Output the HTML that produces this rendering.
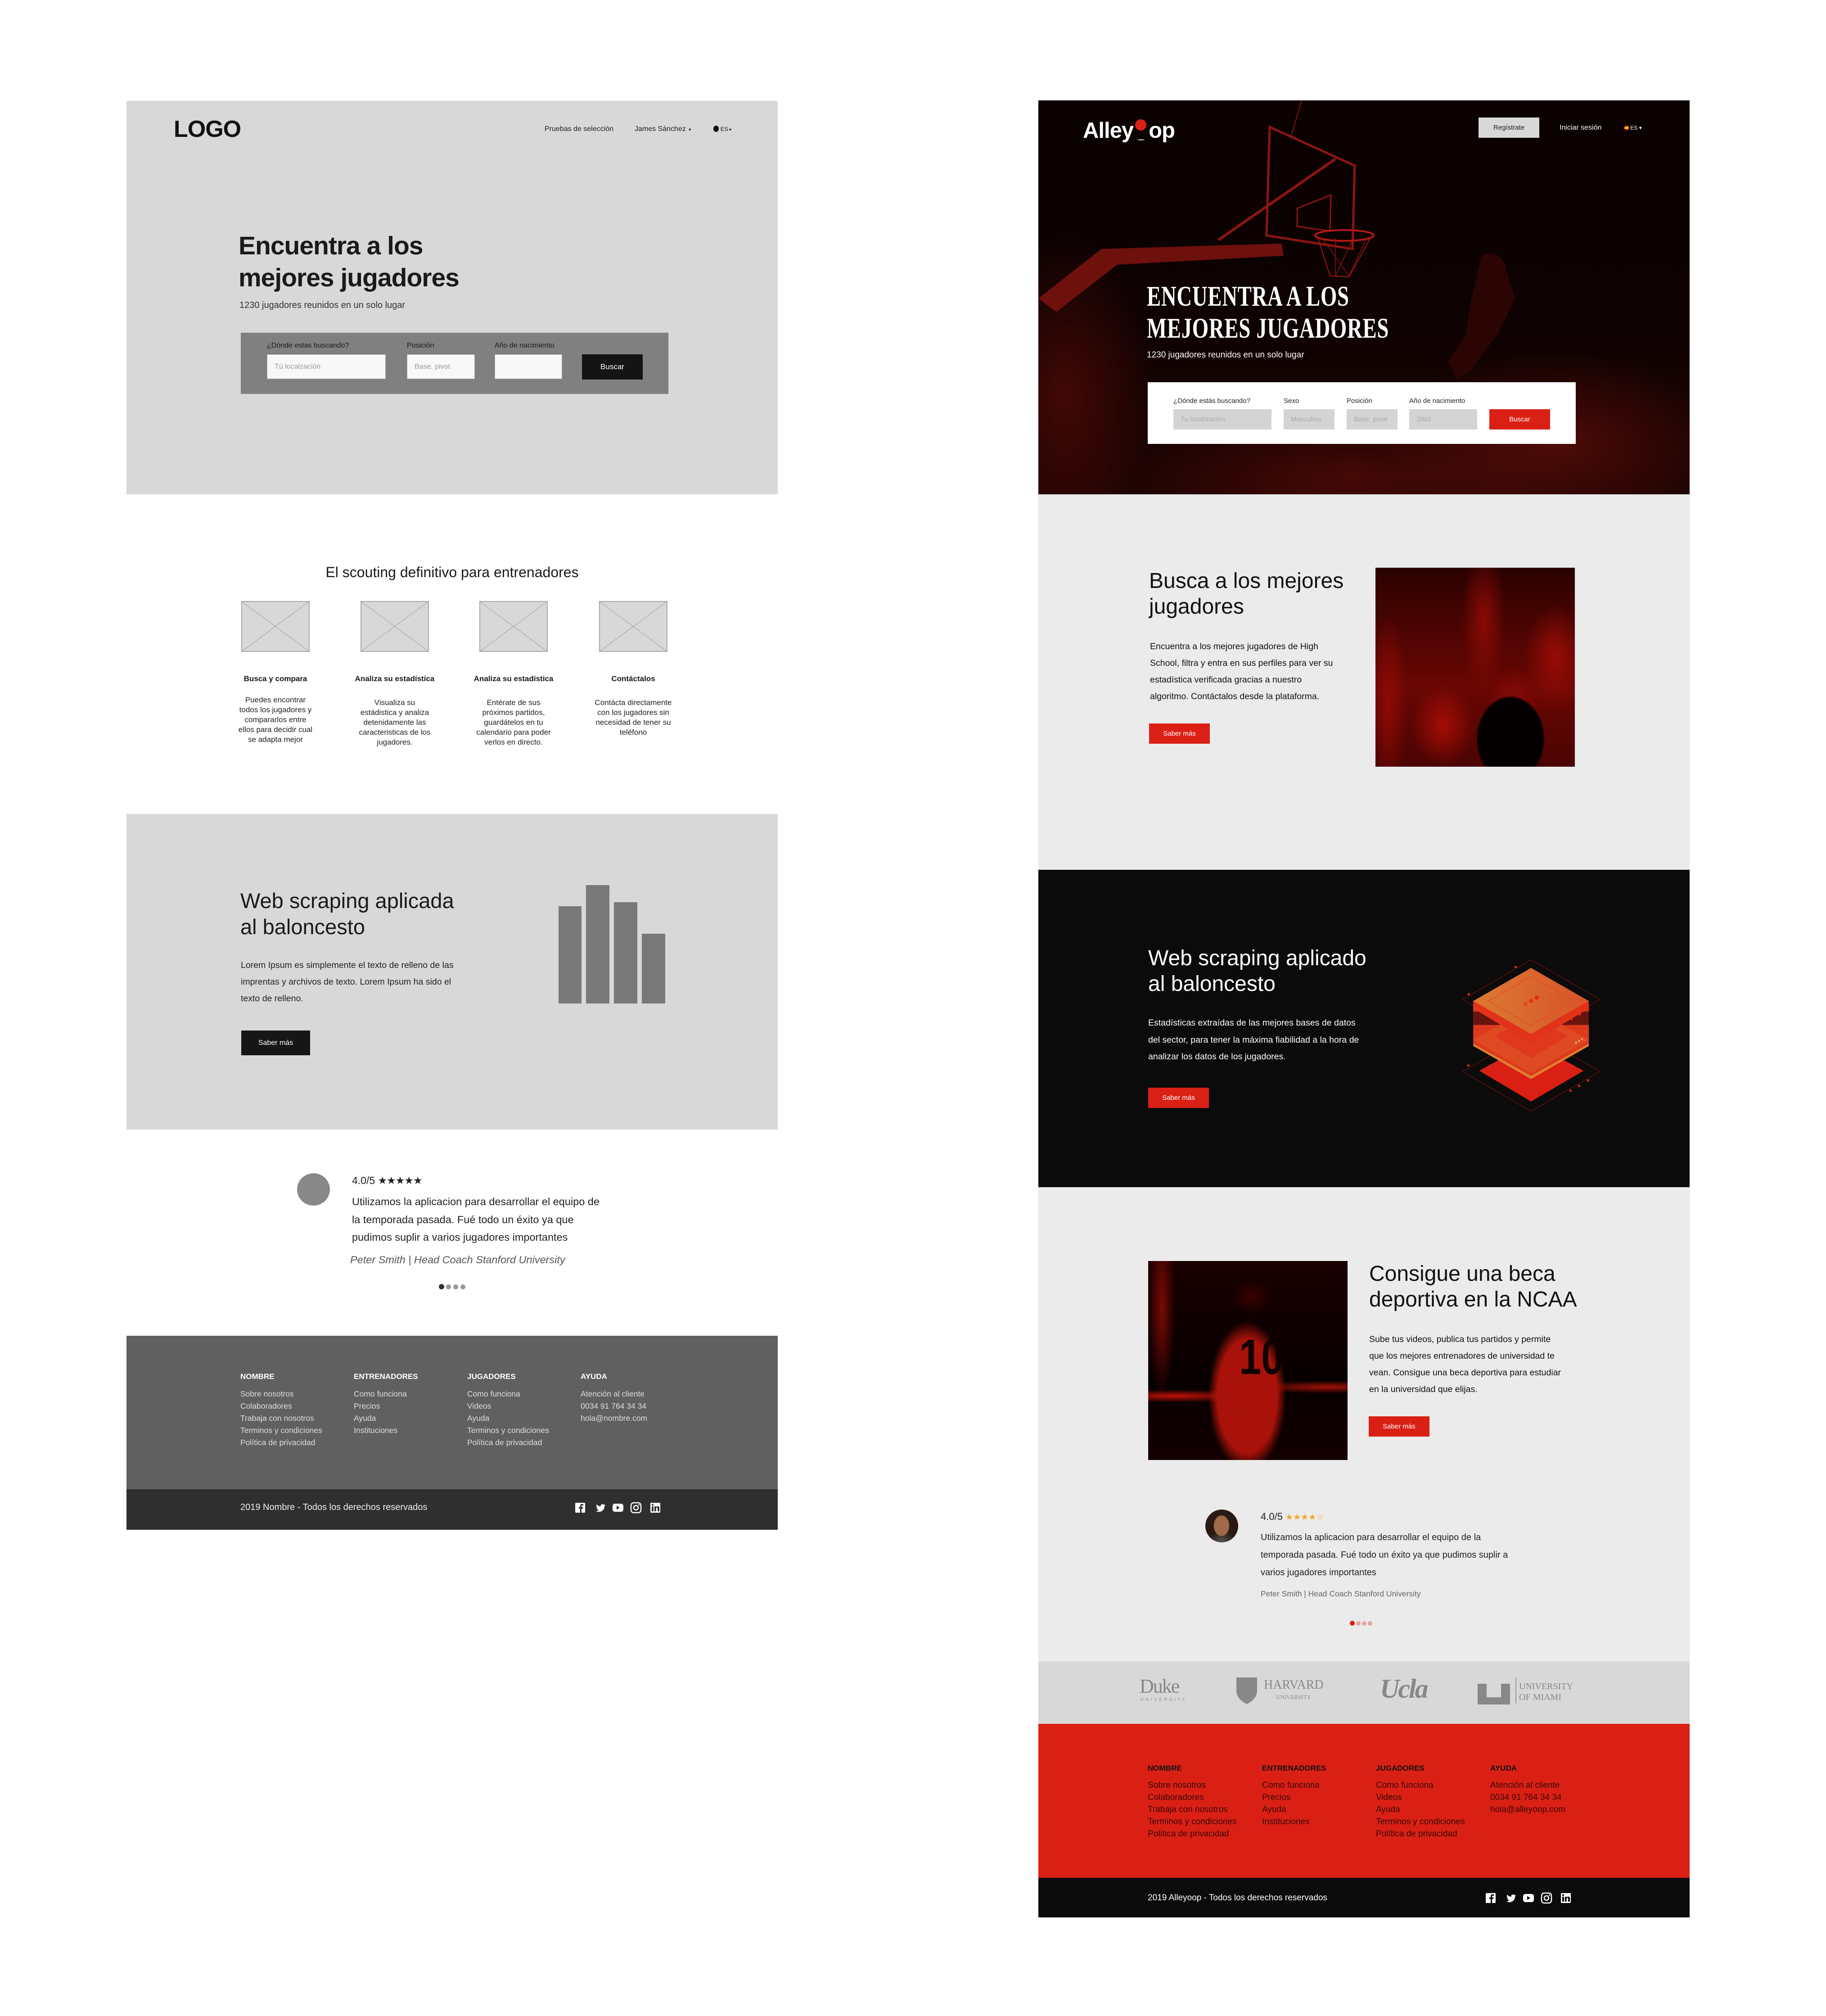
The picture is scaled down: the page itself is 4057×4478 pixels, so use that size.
<!DOCTYPE html>
<html><head><meta charset="utf-8">
<style>
*{margin:0;padding:0;box-sizing:border-box}
body{width:4057px;height:4478px;background:#fff;position:relative;overflow:hidden;font-family:"Liberation Sans",Arial,sans-serif}
.a{position:absolute}
.n{font-family:"Liberation Sans",sans-serif}
.t{position:absolute;white-space:nowrap}
.fcol{position:absolute;line-height:27px}
.fcol b{display:block;margin-bottom:12px}
</style></head><body>

<!-- ================= LEFT WIREFRAME ================= -->
<div class="a" style="left:281px;top:224px;width:1447px;height:874px;background:#d8d8d8"></div>
<div class="t" style="left:386px;top:256px;font-size:52px;line-height:62px;font-weight:bold;color:#111;letter-spacing:-1px">LOGO</div>
<div class="t" style="left:1210px;top:276px;font-size:16px;line-height:22px;color:#222">Pruebas de selección</div>
<div class="t" style="left:1410px;top:276px;font-size:16px;line-height:22px;color:#222">James Sánchez <span style="font-size:9px">▼</span></div>
<div class="t" style="left:1585px;top:276px;font-size:13px;line-height:22px;color:#222"><span style="display:inline-block;width:12px;height:14px;border-radius:50%;background:#111;vertical-align:-2px"></span> ES<span style="font-size:9px">▼</span></div>
<div class="t" style="left:530px;top:511px;font-size:57px;line-height:71px;font-weight:bold;color:#1a1a1a;letter-spacing:-1px">Encuentra a los<br>mejores jugadores</div>
<div class="t" style="left:532px;top:666px;font-size:20px;line-height:24px;color:#333">1230 jugadores reunidos en un solo lugar</div>
<div class="a" style="left:535px;top:739px;width:950px;height:136px;background:#808080"></div>
<div class="t" style="left:593px;top:759px;font-size:16px;color:#1a1a1a">¿Dónde estas buscando?</div>
<div class="t" style="left:904px;top:759px;font-size:16px;color:#1a1a1a">Posición</div>
<div class="t" style="left:1099px;top:759px;font-size:16px;color:#1a1a1a">Año de nacimiento</div>
<div class="a" style="left:593px;top:787px;width:264px;height:55px;background:#f8f8f8;border:1px solid #aaa;font-size:16px;color:#999;line-height:53px;padding-left:16px">Tú localzación</div>
<div class="a" style="left:904px;top:787px;width:151px;height:55px;background:#f8f8f8;border:1px solid #aaa;font-size:16px;color:#999;line-height:53px;padding-left:16px">Base, pivot</div>
<div class="a" style="left:1099px;top:787px;width:150px;height:55px;background:#f8f8f8;border:1px solid #aaa"></div>
<div class="a" style="left:1293px;top:787px;width:135px;height:56px;background:#141414;color:#fff;font-size:17px;line-height:56px;text-align:center">Buscar</div>

<!-- features -->
<div class="t" style="left:281px;width:1447px;text-align:center;top:1252px;font-size:32px;line-height:38px;color:#1a1a1a">El scouting definitivo para entrenadores</div>
<svg class="a" style="left:536px;top:1335px" width="152" height="113"><rect x="1" y="1" width="150" height="111" fill="#d8d8d8" stroke="#a8a8a8" stroke-width="2"/><path d="M1 1L151 112M151 1L1 112" stroke="#999" stroke-width="1"/></svg>
<svg class="a" style="left:801px;top:1335px" width="152" height="113"><rect x="1" y="1" width="150" height="111" fill="#d8d8d8" stroke="#a8a8a8" stroke-width="2"/><path d="M1 1L151 112M151 1L1 112" stroke="#999" stroke-width="1"/></svg>
<svg class="a" style="left:1065px;top:1335px" width="152" height="113"><rect x="1" y="1" width="150" height="111" fill="#d8d8d8" stroke="#a8a8a8" stroke-width="2"/><path d="M1 1L151 112M151 1L1 112" stroke="#999" stroke-width="1"/></svg>
<svg class="a" style="left:1331px;top:1335px" width="152" height="113"><rect x="1" y="1" width="150" height="111" fill="#d8d8d8" stroke="#a8a8a8" stroke-width="2"/><path d="M1 1L151 112M151 1L1 112" stroke="#999" stroke-width="1"/></svg>
<div class="t" style="left:502px;width:220px;text-align:center;top:1498px;font-size:17px;font-weight:bold;color:#1a1a1a">Busca y compara</div>
<div class="t" style="left:767px;width:220px;text-align:center;top:1498px;font-size:17px;font-weight:bold;color:#1a1a1a">Analiza su estadística</div>
<div class="t" style="left:1031px;width:220px;text-align:center;top:1498px;font-size:17px;font-weight:bold;color:#1a1a1a">Analiza su estadística</div>
<div class="t" style="left:1297px;width:220px;text-align:center;top:1498px;font-size:17px;font-weight:bold;color:#1a1a1a">Contáctalos</div>
<div class="t" style="left:502px;width:220px;text-align:center;top:1544px;font-size:17px;line-height:22px;color:#222">Puedes encontrar<br>todos los jugadores y<br>compararlos entre<br>ellos para decidir cual<br>se adapta mejor</div>
<div class="t" style="left:767px;width:220px;text-align:center;top:1550px;font-size:17px;line-height:22px;color:#222">Visualiza su<br>estádistica y analiza<br>detenidamente las<br>caracteristicas de los<br>jugadores.</div>
<div class="t" style="left:1031px;width:220px;text-align:center;top:1550px;font-size:17px;line-height:22px;color:#222">Entérate de sus<br>próximos partidos,<br>guardátelos en tu<br>calendario para poder<br>verlos en directo.</div>
<div class="t" style="left:1297px;width:220px;text-align:center;top:1550px;font-size:17px;line-height:22px;color:#222">Contácta directamente<br>con los jugadores sin<br>necesidad de tener su<br>teléfono</div>

<!-- web scraping left -->
<div class="a" style="left:281px;top:1808px;width:1447px;height:701px;background:#d8d8d8"></div>
<div class="t" style="left:534px;top:1972px;font-size:47px;line-height:58px;color:#1a1a1a">Web scraping aplicada<br>al baloncesto</div>
<div class="t" style="left:535px;top:2126px;font-size:19.5px;line-height:37px;color:#222">Lorem Ipsum es simplemente el texto de relleno de las<br>imprentas y archivos de texto. Lorem Ipsum ha sido el<br>texto de relleno.</div>
<div class="a" style="left:536px;top:2289px;width:153px;height:55px;background:#161616;color:#fff;font-size:16px;line-height:55px;text-align:center">Saber más</div>
<div class="a" style="left:1241px;top:2013px;width:51px;height:216px;background:#787878"></div>
<div class="a" style="left:1302px;top:1966px;width:52px;height:263px;background:#787878"></div>
<div class="a" style="left:1364px;top:2004px;width:52px;height:225px;background:#787878"></div>
<div class="a" style="left:1426px;top:2074px;width:52px;height:155px;background:#787878"></div>

<!-- testimonial left -->
<div class="a" style="left:660px;top:2606px;width:73px;height:72px;border-radius:50%;background:#888"></div>
<div class="t" style="left:782px;top:2608px;font-size:23px;line-height:28px;color:#222">4.0/5 <span style="letter-spacing:-1px">★★★★★</span></div>
<div class="t" style="left:782px;top:2650px;font-size:23.5px;line-height:39.5px;color:#222">Utilizamos la aplicacion para desarrollar el equipo de<br>la temporada pasada. Fué todo un éxito ya que<br>pudimos suplir a varios jugadores importantes</div>
<div class="t" style="left:778px;top:2784px;font-size:23.5px;line-height:28px;color:#555;font-style:italic">Peter Smith | Head Coach Stanford University</div>
<div class="a" style="left:975px;top:2852px;width:12px;height:12px;border-radius:50%;background:#333"></div>
<div class="a" style="left:991px;top:2853px;width:11px;height:11px;border-radius:50%;background:#999"></div>
<div class="a" style="left:1007px;top:2853px;width:11px;height:11px;border-radius:50%;background:#999"></div>
<div class="a" style="left:1023px;top:2853px;width:11px;height:11px;border-radius:50%;background:#999"></div>

<!-- footer left -->
<div class="a" style="left:281px;top:2967px;width:1447px;height:341px;background:#606060"></div>
<div class="a" style="left:281px;top:3308px;width:1447px;height:90px;background:#2f2f2f"></div>
<div class="fcol" style="left:534px;top:3044px;color:#ddd;font-size:17.5px"><b style="color:#fff;font-size:17px">NOMBRE</b>Sobre nosotros<br>Colaboradores<br>Trabaja con nosotros<br>Terminos y condiciones<br>Política de privacidad</div>
<div class="fcol" style="left:786px;top:3044px;color:#ddd;font-size:17.5px"><b style="color:#fff;font-size:17px">ENTRENADORES</b>Como funciona<br>Precios<br>Ayuda<br>Instituciones</div>
<div class="fcol" style="left:1038px;top:3044px;color:#ddd;font-size:17.5px"><b style="color:#fff;font-size:17px">JUGADORES</b>Como funciona<br>Videos<br>Ayuda<br>Terminos y condiciones<br>Política de privacidad</div>
<div class="fcol" style="left:1290px;top:3044px;color:#ddd;font-size:17.5px"><b style="color:#fff;font-size:17px">AYUDA</b>Atención al cliente<br>0034 91 764 34 34<br>hola@nombre.com</div>
<div class="t" style="left:534px;top:3336px;font-size:20px;line-height:24px;color:#eee">2019 Nombre - Todos los derechos reservados</div>
<svg class="a" style="left:1276px;top:3336px" width="205" height="26" viewBox="0 0 205 26">
<g fill="#fff">
<rect x="2" y="2" width="22" height="22" rx="2"/><path d="M16 24V15h3l.5-3.5H16V9.5c0-1 .4-1.6 1.7-1.6H20V4.8c-.5-.1-1.6-.2-2.7-.2-2.6 0-4.2 1.6-4.2 4.4v2.5H10V15h3v9z" fill="#2f2f2f"/>
<path d="M69 7c-.8.4-1.6.6-2.5.7.9-.6 1.6-1.4 1.9-2.4-.9.5-1.8.9-2.8 1.1-1.7-1.8-4.6-1.7-6.2.2-.8.9-1.1 2.2-.8 3.4-3.5-.2-6.8-1.8-9-4.5-1.2 2-.6 4.6 1.4 5.9-.7 0-1.4-.2-2-.5 0 2.1 1.5 3.9 3.5 4.3-.6.2-1.3.2-2 .1.6 1.8 2.2 3 4.1 3-1.9 1.5-4.3 2.2-6.7 1.9 2 1.3 4.4 2 6.8 2 8.2 0 12.7-7 12.5-13.2.9-.6 1.6-1.3 2.2-2.1z"/>
<rect x="85" y="4" width="24" height="18" rx="5"/><path d="M94 8.5v9l7-4.5z" fill="#2f2f2f"/>
<rect x="126" y="2" width="22" height="22" rx="6" fill="none" stroke="#fff" stroke-width="2.5"/><circle cx="137" cy="13" r="5" fill="none" stroke="#fff" stroke-width="2.5"/><circle cx="143.5" cy="6.5" r="1.5"/>
<rect x="169" y="2" width="22" height="22" rx="2"/><rect x="172" y="10" width="4" height="11" fill="#2f2f2f"/><circle cx="174" cy="6.5" r="2.2" fill="#2f2f2f"/><path d="M178 10h3.8v1.6c.6-1 1.8-1.9 3.6-1.9 3 0 3.6 2 3.6 4.5V21h-4v-5.8c0-1.3-.1-2.6-1.6-2.6s-1.7 1.1-1.7 2.5V21H178z" fill="#2f2f2f"/>
</g></svg>

<!-- ================= RIGHT DESIGN ================= -->
<div class="a" style="left:2307px;top:223px;width:1447px;height:875px;overflow:hidden;background:#0a0101">
<div class="a" style="left:0;top:0;width:1447px;height:875px;background:
radial-gradient(ellipse 380px 200px at 1150px 760px,rgba(130,18,12,.5),transparent),
radial-gradient(ellipse 500px 150px at 700px 840px,rgba(110,14,9,.5),transparent),
radial-gradient(ellipse 200px 350px at 60px 650px,rgba(110,14,9,.5),transparent),
linear-gradient(180deg,#0b0101 0%,#0e0202 55%,#1e0403 100%)"></div>
<svg class="a" style="left:0;top:0" width="1447" height="875" viewBox="0 0 1447 875">
<g fill="none" stroke="#8c1510" stroke-width="5">
<path d="M514 59 L703 145 L698 330 L507 300 Z"/>
<path d="M575 240 L650 210 L648 290 L575 280 Z" stroke-width="3"/>
<path d="M400 310 L660 130" stroke-width="6"/>
<path d="M585 0 L560 85" stroke-width="2"/>
</g>
<path d="M0 440 L140 330 L540 318 L545 345 L175 365 L40 470 Z" fill="#6e100c"/>
<ellipse cx="680" cy="300" rx="65" ry="12" fill="none" stroke="#b41a12" stroke-width="4"/>
<path d="M620 302 L648 390 L690 392 L740 302" fill="none" stroke="#a0160f" stroke-width="2"/>
<path d="M630 305 L690 390 M660 305 L660 390 M700 305 L660 390 M730 305 L690 390" stroke="#8c1510" stroke-width="1.5"/>
<path d="M985 345 C1010 330 1040 350 1040 380 L1060 440 L1020 520 L990 560 L960 600 L930 620 L910 580 L950 520 L960 450 Z" fill="#2a0504"/>
</svg>
</div>
<div class="t" style="left:2406px;top:261px;font-size:49px;line-height:58px;font-weight:bold;color:#fff;letter-spacing:-1px">Alley<span style="display:inline-block;width:34px"></span>op</div>
<div class="a" style="left:2522px;top:265px;width:25px;height:25px;border-radius:50%;background:#d92015"></div>
<div class="a" style="left:2527px;top:309px;width:16px;height:3px;border-radius:50%;background:#aaa"></div>
<div class="a" style="left:3285px;top:261px;width:135px;height:45px;background:#d8d8d8;color:#222;font-size:15px;line-height:45px;text-align:center">Regístrate</div>
<div class="t" style="left:3465px;top:273px;font-size:16px;line-height:22px;color:#fff">Iniciar sesión</div>
<div class="t" style="left:3609px;top:275px;font-size:12px;line-height:18px;color:#fff"><span style="display:inline-block;width:10px;height:12px;border-radius:50%;background:linear-gradient(#c60b1e 30%,#ffc400 30%,#ffc400 70%,#c60b1e 70%);vertical-align:-2px"></span> ES ▾</div>
<div class="t" style="left:2548px;top:622px;font-size:64px;line-height:71px;font-weight:bold;color:#fff;letter-spacing:1px;font-family:'Liberation Serif',serif;transform:scaleX(.73);transform-origin:left">ENCUENTRA A LOS<br>MEJORES JUGADORES</div>
<div class="t" style="left:2548px;top:777px;font-size:19px;line-height:24px;color:#fff">1230 jugadores reunidos en un solo lugar</div>
<div class="a" style="left:2550px;top:849px;width:951px;height:137px;background:#fff"></div>
<div class="t" style="left:2607px;top:882px;font-size:15px;color:#222">¿Dónde estás buscando?</div>
<div class="t" style="left:2852px;top:882px;font-size:15px;color:#222">Sexo</div>
<div class="t" style="left:2992px;top:882px;font-size:15px;color:#222">Posición</div>
<div class="t" style="left:3131px;top:882px;font-size:15px;color:#222">Año de nacimiento</div>
<div class="a" style="left:2607px;top:909px;width:218px;height:45px;background:#d4d4d4;color:#a8a8a8;font-size:15px;line-height:45px;padding-left:16px">Tu localización</div>
<div class="a" style="left:2852px;top:909px;width:113px;height:45px;background:#d4d4d4;color:#a8a8a8;font-size:15px;line-height:45px;padding-left:16px">Masculino</div>
<div class="a" style="left:2992px;top:909px;width:113px;height:45px;background:#d4d4d4;color:#a8a8a8;font-size:15px;line-height:45px;padding-left:16px">Base, pivot</div>
<div class="a" style="left:3131px;top:909px;width:151px;height:45px;background:#d4d4d4;color:#a8a8a8;font-size:15px;line-height:45px;padding-left:16px">2002</div>
<div class="a" style="left:3309px;top:909px;width:135px;height:45px;background:#da2015;color:#fff;font-size:15px;line-height:45px;text-align:center">Buscar</div>

<!-- section busca -->
<div class="a" style="left:2307px;top:1098px;width:1447px;height:834px;background:#ebebeb"></div>
<div class="t" style="left:2553px;top:1262px;font-size:48px;line-height:57px;color:#111">Busca a los mejores<br>jugadores</div>
<div class="t" style="left:2555px;top:1418px;font-size:19.5px;line-height:37px;color:#111">Encuentra a los mejores jugadores de High<br>School, filtra y entra en sus perfiles para ver su<br>estadística verificada gracias a nuestro<br>algoritmo. Contáctalos desde la plataforma.</div>
<div class="a" style="left:2553px;top:1607px;width:135px;height:45px;background:#da2015;color:#fff;font-size:15px;line-height:45px;text-align:center">Saber más</div>
<div class="a" style="left:3056px;top:1261px;width:443px;height:442px;overflow:hidden;background:
radial-gradient(ellipse 120px 150px at 300px 380px,#050000 60%,transparent 64%),
radial-gradient(ellipse 60px 80px at 310px 300px,#8a0a05,transparent),
radial-gradient(ellipse 70px 90px at 150px 350px,#a50d06,transparent),
radial-gradient(ellipse 40px 200px at 30px 300px,#8d0a05,transparent),
radial-gradient(ellipse 70px 120px at 400px 200px,#9a0c06,transparent),
radial-gradient(ellipse 50px 160px at 240px 120px,#8a0a05,transparent),
linear-gradient(180deg,#2a0200,#6a0703 60%,#4a0402)"></div>

<!-- dark section -->
<div class="a" style="left:2307px;top:1932px;width:1447px;height:705px;background:#0b0b0b"></div>
<div class="t" style="left:2551px;top:2100px;font-size:48px;line-height:57px;color:#fff">Web scraping aplicado<br>al baloncesto</div>
<div class="t" style="left:2551px;top:2254px;font-size:19.5px;line-height:37.5px;color:#fff">Estadísticas extraídas de las mejores bases de datos<br>del sector, para tener la máxima fiabilidad a la hora de<br>analizar los datos de los jugadores.</div>
<div class="a" style="left:2551px;top:2416px;width:135px;height:45px;background:#da2015;color:#fff;font-size:15px;line-height:45px;text-align:center">Saber más</div>
<svg class="a" style="left:3250px;top:2120px" width="340" height="360" viewBox="0 0 1020 1080">
<defs><linearGradient id="g1" x1="0" x2="1"><stop offset="0" stop-color="#da7a32"/><stop offset="1" stop-color="#d9532a"/></linearGradient></defs>
<g fill="none" stroke="#8a1510" stroke-width="3">
<path d="M455 35 L915 300 L455 565 L0 300 Z"/>
<path d="M455 520 L915 780 L455 1045 L0 780 Z"/>
</g>
<path d="M455 585 L805 775 L455 980 L110 775 Z" fill="#da2015"/>
<path d="M70 310 L840 310 L840 610 L455 830 L70 610 Z" fill="#e08030"/>
<path d="M70 310 L840 310 L840 595 L455 810 L70 595 Z" fill="#dd3a1c"/>
<path d="M70 380 L840 380 L840 470 L70 470 Z" fill="#6a1410"/>
<path d="M455 350 L840 570 L455 790 L70 570 Z" fill="#e04a22"/>
<path d="M455 410 L700 545 L455 690 L210 545 Z" fill="#e0381c"/>
<path d="M70 310 L455 530 L840 310 L840 360 L455 590 L70 360 Z" fill="#e2321a"/>
<path d="M455 90 L840 310 L455 530 L70 310 Z" fill="url(#g1)"/>
<path d="M455 148 L740 310 L455 475 L170 310 Z" fill="none" stroke="#e24a22" stroke-width="4"/>
<g fill="#e02a18"><circle cx="493" cy="288" r="14"/><circle cx="455" cy="310" r="14" opacity=".8"/><circle cx="418" cy="332" r="14" opacity=".5"/>
<circle cx="353" cy="84" r="8"/><circle cx="40" cy="265" r="8"/><circle cx="37" cy="740" r="8"/><circle cx="835" cy="367" r="8"/><circle cx="780" cy="400" r="8"/><circle cx="725" cy="432" r="8"/><circle cx="835" cy="840" r="8"/><circle cx="775" cy="876" r="8"/><circle cx="718" cy="908" r="8"/></g>
<g fill="#f0a070"><circle cx="795" cy="565" r="7"/><circle cx="775" cy="577" r="7"/><circle cx="755" cy="588" r="7"/></g>
</svg>

<!-- NCAA section -->
<div class="a" style="left:2307px;top:2637px;width:1447px;height:1053px;background:#ebebeb"></div>
<div class="a" style="left:2551px;top:2801px;width:443px;height:442px;overflow:hidden;background:
radial-gradient(ellipse 120px 230px at 220px 300px,#a8120a 55%,transparent 72%),
radial-gradient(ellipse 45px 40px at 230px 80px,#3a0000,transparent),
radial-gradient(ellipse 200px 14px at 60px 300px,#c01208,transparent),
radial-gradient(ellipse 200px 14px at 400px 280px,#a01006,transparent),
radial-gradient(ellipse 30px 200px at 30px 100px,#7a0a05,transparent),
linear-gradient(180deg,#1a0000,#080000 60%,#140000)">
<div class="t" style="left:190px;top:150px;font-size:110px;font-weight:bold;color:#120000;transform:scaleX(.8)">10</div>
<div class="t" style="left:185px;top:105px;font-size:28px;font-weight:bold;color:#120000;transform:rotate(22deg)">BURKS</div>
</div>
<div class="t" style="left:3042px;top:2801px;font-size:48px;line-height:57px;color:#111">Consigue una beca<br>deportiva en la NCAA</div>
<div class="t" style="left:3042px;top:2957px;font-size:19.5px;line-height:37px;color:#111">Sube tus videos, publica tus partidos y permite<br>que los mejores entrenadores de universidad te<br>vean. Consigue una beca deportiva para estudiar<br>en la universidad que elijas.</div>
<div class="a" style="left:3041px;top:3146px;width:135px;height:45px;background:#da2015;color:#fff;font-size:15px;line-height:45px;text-align:center">Saber más</div>
<div class="a" style="left:2678px;top:3353px;width:73px;height:73px;border-radius:50%;overflow:hidden;background:radial-gradient(ellipse 18px 24px at 36px 36px,#a06a4a 90%,transparent),radial-gradient(ellipse 30px 20px at 36px 70px,#555,transparent),#2a1a14"></div>
<div class="t" style="left:2801px;top:3355px;font-size:22px;line-height:28px;color:#222">4.0/5 <span style="color:#f5a623;font-size:19px">★★★★☆</span></div>
<div class="t" style="left:2801px;top:3396px;font-size:20px;line-height:39px;color:#222">Utilizamos la aplicacion para desarrollar el equipo de la<br>temporada pasada. Fué todo un éxito ya que pudimos suplir a<br>varios jugadores importantes</div>
<div class="t" style="left:2801px;top:3529px;font-size:17.5px;line-height:22px;color:#666">Peter Smith | Head Coach Stanford University</div>
<div class="a" style="left:2999px;top:3600px;width:11px;height:11px;border-radius:50%;background:#da2015"></div>
<div class="a" style="left:3013px;top:3601px;width:10px;height:10px;border-radius:50%;background:#e8a3a0"></div>
<div class="a" style="left:3026px;top:3601px;width:10px;height:10px;border-radius:50%;background:#e8a3a0"></div>
<div class="a" style="left:3039px;top:3601px;width:10px;height:10px;border-radius:50%;background:#e8a3a0"></div>

<!-- logos -->
<div class="a" style="left:2307px;top:3690px;width:1447px;height:139px;background:#d8d8d8"></div>
<div class="t" style="left:2532px;top:3722px;font-size:44px;line-height:48px;color:#888;font-family:'Liberation Serif',serif;letter-spacing:-2px">Duke</div>
<div class="t" style="left:2534px;top:3770px;font-size:9px;color:#888;letter-spacing:5px">UNIVERSITY</div>
<svg class="a" style="left:2747px;top:3726px" width="48" height="60"><path d="M0 0H46V30C46 44 34 54 23 59 12 54 0 44 0 30Z" fill="#888"/></svg>
<div class="t" style="left:2808px;top:3728px;font-size:28px;line-height:30px;color:#888;font-family:'Liberation Serif',serif">HARVARD</div>
<div class="t" style="left:2835px;top:3762px;font-size:13px;color:#888;font-family:'Liberation Serif',serif">UNIVERSITY</div>
<div class="t" style="left:3066px;top:3718px;font-size:60px;line-height:66px;color:#888;font-family:'Liberation Serif',serif;font-weight:bold;font-style:italic;letter-spacing:-3px">Ucla</div>
<svg class="a" style="left:3283px;top:3740px" width="74" height="46"><path d="M0 0H20V30H52V0H72V46H0Z" fill="#888"/></svg>
<div class="a" style="left:3367px;top:3726px;width:2px;height:58px;background:#999"></div>
<div class="t" style="left:3375px;top:3734px;font-size:20px;line-height:24px;color:#888;font-family:'Liberation Serif',serif">UNIVERSITY<br>OF MIAMI</div>

<!-- red footer -->
<div class="a" style="left:2307px;top:3829px;width:1447px;height:342px;background:#da2015"></div>
<div class="a" style="left:2307px;top:4171px;width:1447px;height:88px;background:#0b0b0b"></div>
<div class="fcol" style="left:2550px;top:3914px;color:#3a0806;font-size:19px"><b style="color:#111;font-size:17px;margin-bottom:11px">NOMBRE</b>Sobre nosotros<br>Colaboradores<br>Trabaja con nosotros<br>Terminos y condiciones<br>Política de privacidad</div>
<div class="fcol" style="left:2804px;top:3914px;color:#3a0806;font-size:19px"><b style="color:#111;font-size:17px;margin-bottom:11px">ENTRENADORES</b>Como funciona<br>Precios<br>Ayuda<br>Instituciones</div>
<div class="fcol" style="left:3057px;top:3914px;color:#3a0806;font-size:19px"><b style="color:#111;font-size:17px;margin-bottom:11px">JUGADORES</b>Como funciona<br>Videos<br>Ayuda<br>Terminos y condiciones<br>Política de privacidad</div>
<div class="fcol" style="left:3311px;top:3914px;color:#3a0806;font-size:19px"><b style="color:#111;font-size:17px;margin-bottom:11px">AYUDA</b>Atención al cliente<br>0034 91 764 34 34<br>hola@alleyoop.com</div>
<div class="t" style="left:2550px;top:4204px;font-size:19px;line-height:24px;color:#fff">2019 Alleyoop - Todos los derechos reservados</div>
<svg class="a" style="left:3299px;top:4203px" width="205" height="26" viewBox="0 0 205 26">
<g fill="#fff">
<rect x="2" y="2" width="22" height="22" rx="2"/><path d="M16 24V15h3l.5-3.5H16V9.5c0-1 .4-1.6 1.7-1.6H20V4.8c-.5-.1-1.6-.2-2.7-.2-2.6 0-4.2 1.6-4.2 4.4v2.5H10V15h3v9z" fill="#0b0b0b"/>
<path d="M69 7c-.8.4-1.6.6-2.5.7.9-.6 1.6-1.4 1.9-2.4-.9.5-1.8.9-2.8 1.1-1.7-1.8-4.6-1.7-6.2.2-.8.9-1.1 2.2-.8 3.4-3.5-.2-6.8-1.8-9-4.5-1.2 2-.6 4.6 1.4 5.9-.7 0-1.4-.2-2-.5 0 2.1 1.5 3.900 3.5 4.3-.6.2-1.3.2-2 .1.6 1.8 2.2 3 4.1 3-1.9 1.5-4.3 2.2-6.7 1.9 2 1.3 4.4 2 6.8 2 8.2 0 12.7-7 12.5-13.2.9-.6 1.6-1.3 2.2-2.1z"/>
<rect x="85" y="4" width="24" height="18" rx="5"/><path d="M94 8.5v9l7-4.5z" fill="#0b0b0b"/>
<rect x="126" y="2" width="22" height="22" rx="6" fill="none" stroke="#fff" stroke-width="2.5"/><circle cx="137" cy="13" r="5" fill="none" stroke="#fff" stroke-width="2.5"/><circle cx="143.5" cy="6.5" r="1.5"/>
<rect x="169" y="2" width="22" height="22" rx="2"/><rect x="172" y="10" width="4" height="11" fill="#0b0b0b"/><circle cx="174" cy="6.5" r="2.2" fill="#0b0b0b"/><path d="M178 10h3.8v1.6c.6-1 1.8-1.9 3.6-1.9 3 0 3.6 2 3.6 4.5V21h-4v-5.8c0-1.3-.1-2.6-1.6-2.6s-1.7 1.1-1.7 2.5V21H178z" fill="#0b0b0b"/>
</g></svg>

</body></html>
